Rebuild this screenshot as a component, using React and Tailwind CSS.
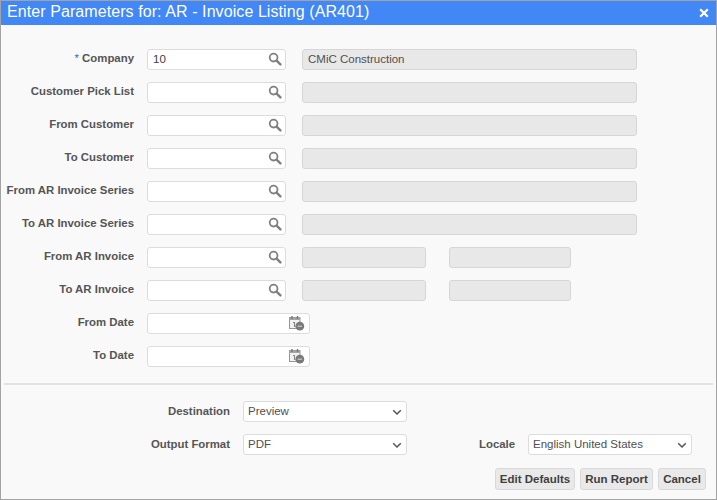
const FONT = "font-['Liberation_Sans',Arial,sans-serif]";

function Search() {
  return (
    <svg width="14" height="14" viewBox="0 0 14 14" className="absolute right-[3px] top-[2px]" fill="none">
      <circle cx="5.6" cy="5.6" r="3.9" stroke="#808080" strokeWidth="1.8" />
      <path d="M8.6 8.6 L12.4 12.4" stroke="#808080" strokeWidth="2.4" strokeLinecap="round" />
    </svg>
  );
}

function Cal() {
  return (
    <svg width="16" height="16" viewBox="0 0 16 16" className="absolute right-[4px] top-[1px]" fill="none">
      <rect x="0.5" y="2.5" width="10.5" height="11" fill="#f2f2f2" stroke="#969696" />
      <rect x="0.5" y="2.5" width="10.5" height="2.5" fill="#a5a5a5" />
      <path d="M3 1v3M8.5 1v3" stroke="#777" strokeWidth="1.4" />
      <path d="M4 7.5h1.5v4.5" stroke="#888" strokeWidth="1.1" />
      <circle cx="10.8" cy="11.2" r="4.4" fill="#7a7a7a" />
      <path d="M8.6 11.2h4.4" stroke="#d8d8d8" strokeWidth="1" />
    </svg>
  );
}

function Label({ children, req }) {
  return (
    <div className="w-[133px] shrink-0 text-right text-[11.4px] font-bold text-[#555555] whitespace-nowrap leading-[20px] -mt-[3px]">
      {req && <span className="text-[#2a6fc9] font-normal">* </span>}
      {children}
    </div>
  );
}

function Lookup({ value }) {
  return (
    <div className="relative ml-[13px] w-[139px] h-[21px] shrink-0 bg-white border border-[#dcdcdc] rounded-[3px] pl-[5px] text-[11.5px] leading-[19px] text-[#404040]">
      {value}
      <Search />
    </div>
  );
}

function Ro({ w, value, ml }) {
  return (
    <div className={`${w} ${ml} h-[21px] shrink-0 bg-[#e8e8e8] border border-[#d6d6d6] rounded-[3px] pl-[5px] text-[11.5px] leading-[19px] text-[#505050]`}>
      {value}
    </div>
  );
}

function Row({ label, req, value, desc, split }) {
  return (
    <div className="flex items-center h-[21px]">
      <Label req={req}>{label}</Label>
      <Lookup value={value} />
      {split ? (
        <>
          <Ro w="w-[124px]" ml="ml-[16px]" />
          <Ro w="w-[122px]" ml="ml-[23px]" />
        </>
      ) : (
        <Ro w="w-[335px]" ml="ml-[16px]" value={desc} />
      )}
    </div>
  );
}

function DateRow({ label }) {
  return (
    <div className="flex items-center h-[21px]">
      <Label>{label}</Label>
      <div className="relative ml-[13px] w-[163px] h-[21px] bg-white border border-[#dcdcdc] rounded-[3px]">
        <Cal />
      </div>
    </div>
  );
}

function Select({ value, w }) {
  return (
    <div className={`relative ${w} h-[21px] shrink-0 bg-white border border-[#dcdcdc] rounded-[3px] pl-[4px] text-[11.5px] leading-[19px] text-[#505050]`}>
      {value}
      <svg width="10" height="7" viewBox="0 0 10 7" className="absolute right-[4px] top-[7px]" fill="none">
        <path d="M1.2 1.2 L5 5 L8.8 1.2" stroke="#555555" strokeWidth="1.5" />
      </svg>
    </div>
  );
}

function Btn({ children, w }) {
  return (
    <div className={`${w} h-[22px] bg-[#e9e9e9] border border-[#d9d9d9] rounded-[3px] text-center text-[11.5px] font-bold leading-[20px] text-[#404040]`}>
      {children}
    </div>
  );
}

export default function App() {
  return (
    <div className={`${FONT} w-[717px] h-[500px] bg-[#f9f9f9] border border-[#a3a3a3] flex flex-col overflow-hidden`}>
      <div className="h-[24px] shrink-0 bg-[#4187f5] flex items-center justify-between pl-[6px] pr-[7px]">
        <span className="text-[16px] text-white tracking-[0.08px] leading-[22px] -mt-[2px]">Enter Parameters for: AR - Invoice Listing (AR401)</span>
        <svg width="10" height="10" viewBox="0 0 10 10" fill="none">
          <path d="M1.2 1.2 L8.8 8.8 M8.8 1.2 L1.2 8.8" stroke="#fff" strokeWidth="2.2" />
        </svg>
      </div>
      <div className="flex flex-col gap-[12px] pt-[24px]">
        <Row label="Company" req value="10" desc="CMiC Construction" />
        <Row label="Customer Pick List" />
        <Row label="From Customer" />
        <Row label="To Customer" />
        <Row label="From AR Invoice Series" />
        <Row label="To AR Invoice Series" />
        <Row label="From AR Invoice" split />
        <Row label="To AR Invoice" split />
        <DateRow label="From Date" />
        <DateRow label="To Date" />
      </div>
      <div className="mt-[16px] mx-[3px] h-[2px] bg-[#e2e2e2]" />
      <div className="flex flex-col gap-[12px] pt-[16px]">
        <div className="flex items-center h-[21px]">
          <div className="w-[229px] text-right text-[11.4px] font-bold text-[#555555]">Destination</div>
          <div className="ml-[13px]"><Select w="w-[164px]" value="Preview" /></div>
        </div>
        <div className="flex items-center h-[21px]">
          <div className="w-[229px] text-right text-[11.4px] font-bold text-[#555555]">Output Format</div>
          <div className="ml-[13px]"><Select w="w-[164px]" value="PDF" /></div>
          <div className="ml-[72px] w-[36px] text-[11.4px] font-bold text-[#555555]">Locale</div>
          <div className="ml-[13px]"><Select w="w-[164px]" value="English United States" /></div>
        </div>
      </div>
      <div className="flex justify-end gap-[5px] pr-[10px] pt-[13px]">
        <Btn w="w-[80px]">Edit Defaults</Btn>
        <Btn w="w-[73px]">Run Report</Btn>
        <Btn w="w-[48px]">Cancel</Btn>
      </div>
    </div>
  );
}
